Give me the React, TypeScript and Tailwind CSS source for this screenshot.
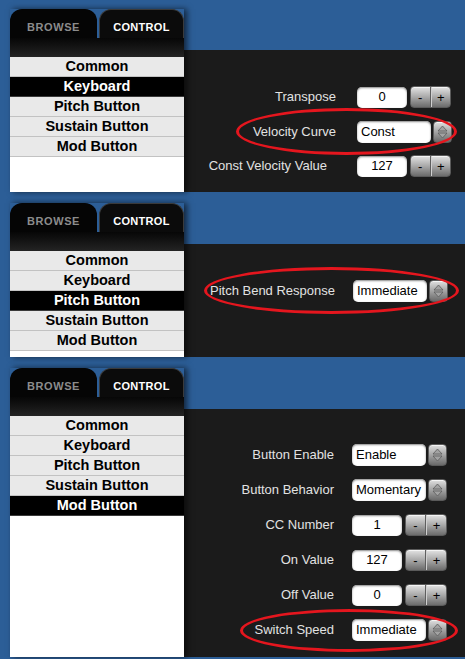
import React from "react";

type Row =
  | { kind: "num"; label: string; value: string; labelPad?: number }
  | { kind: "select"; label: string; value: string; labelPad?: number };

interface Ring {
  row: number;
  left: number;
  right: number;
  top: number;
  bottom: number;
}

interface PanelProps {
  height: number;
  selected: string;
  labelWidth: number;
  gap: number;
  rowGap: number;
  padTop: number;
  rows: Row[];
  ring: Ring;
  inputW: number;
  stepW: number;
}

const MENU = ["Common", "Keyboard", "Pitch Button", "Sustain Button", "Mod Button"];

function Stepper({ width }: { width: number }) {
  return (
    <div
      className="flex h-[22px] rounded-[4px] border border-[#5a5a5a] bg-linear-to-b from-[#e4e4e4] via-[#a9a9a9] to-[#6c6c6c] text-[13px] leading-none text-black shadow-[inset_0_1px_0_#f4f4f4]"
      style={{ width }}
    >
      <div className="flex flex-1 items-center justify-center border-r border-[#5e5e5e]">-</div>
      <div className="flex flex-1 items-center justify-center border-l border-[#d0d0d0]">+</div>
    </div>
  );
}

function UpDown() {
  return (
    <div className="flex h-[22px] w-[19px] items-center justify-center rounded-[4px] border border-[#5a5a5a] bg-linear-to-b from-[#e0e0e0] via-[#a4a4a4] to-[#6a6a6a] shadow-[inset_0_1px_0_#f4f4f4]">
      <svg width="11" height="14" viewBox="0 0 11 14">
        <path d="M5.5 1 L10 6 L1 6 Z" fill="#a2a2a2" stroke="#5c5c5c" strokeWidth="0.8" />
        <path d="M5.5 13 L10 8 L1 8 Z" fill="#a2a2a2" stroke="#5c5c5c" strokeWidth="0.8" />
      </svg>
    </div>
  );
}

function Field({ row, inputW, stepW }: { row: Row; inputW: number; stepW: number }) {
  if (row.kind === "num") {
    return (
      <div className="flex items-center gap-[3px]">
        <div
          className="flex h-[21px] items-center justify-center rounded-[5px] bg-white text-[13px] text-black shadow-[inset_0_1px_2px_#888]"
          style={{ width: inputW }}
        >
          {row.value}
        </div>
        <Stepper width={stepW} />
      </div>
    );
  }
  return (
    <div className="flex items-center gap-[2px]">
      <div className="flex h-[22px] w-[74px] items-center overflow-hidden whitespace-nowrap rounded-[5px] bg-white pl-[4px] text-[13px] text-black shadow-[inset_0_1px_2px_#888]">
        {row.value}
      </div>
      <UpDown />
    </div>
  );
}

function Panel(p: PanelProps) {
  return (
    <div className="flex bg-[#2c5e97] pt-[9px] pb-[2px] pl-[10px]" style={{ height: p.height }}>
      {/* left navigation */}
      <div className="relative z-10 flex w-[174px] flex-col bg-white shadow-[3px_0_6px_rgba(0,0,0,0.6)]">
        <div className="flex h-[29px] gap-[2px] bg-[#2c5e97]">
          <div className="flex w-[87px] items-center justify-center rounded-t-[12px] bg-[#050505] pt-[7px] text-[11px] font-bold tracking-[0.6px] text-[#8c8c8c]">
            BROWSE
          </div>
          <div className="flex flex-1 items-center justify-center rounded-t-[12px] border border-b-0 border-[#3a3a3a] bg-[#0b0b0b] pt-[6px] text-[11px] font-bold tracking-[0.3px] text-white">
            CONTROL
          </div>
        </div>
        <div className="h-[19px] bg-linear-to-b from-[#070707] to-[#242424]" />
        {MENU.map((m) => (
          <div
            key={m}
            className={
              m === p.selected
                ? "flex h-[20px] items-center justify-center border-b border-[#3a3a3a] bg-black text-[14.5px] font-bold text-white"
                : "flex h-[20px] items-center justify-center border-b border-[#c2c2c2] bg-[#e9e9e9] text-[14.5px] font-bold text-black"
            }
          >
            {m}
          </div>
        ))}
        <div className="flex-1 bg-white" />
      </div>

      {/* settings area */}
      <div className="mt-[41px] flex flex-1 flex-col bg-[#1b1b1b]" style={{ paddingTop: p.padTop, rowGap: p.rowGap }}>
        {p.rows.map((r, i) => (
          <div key={r.label} className="relative flex h-[22px] items-center">
            <div
              className="shrink-0 whitespace-nowrap text-right text-[13px] text-[#e2e2e2]"
              style={{ width: p.labelWidth, paddingRight: r.labelPad ?? 0, marginRight: p.gap }}
            >
              {r.label}
            </div>
            <Field row={r} inputW={p.inputW} stepW={p.stepW} />
            {p.ring.row === i && (
              <div
                className="pointer-events-none absolute rounded-[50%] border-[3.5px] border-[#e5161e]"
                style={{ left: p.ring.left, right: p.ring.right, top: p.ring.top, bottom: p.ring.bottom }}
              />
            )}
          </div>
        ))}
      </div>
    </div>
  );
}

export default function App() {
  return (
    <div className="w-[465px] bg-[#2c5e97] font-['Liberation_Sans',Arial,sans-serif]">
      <Panel
        height={194}
        selected="Keyboard"
        labelWidth={152}
        gap={21}
        rowGap={12.5}
        padTop={36}
        inputW={50}
        stepW={41}
        rows={[
          { kind: "num", label: "Transpose", value: "0" },
          { kind: "select", label: "Velocity Curve", value: "Const" },
          { kind: "num", label: "Const Velocity Value", value: "127", labelPad: 9 },
        ]}
        ring={{ row: 1, left: 52, right: 8, top: -13, bottom: -12 }}
      />
      <Panel
        height={165}
        selected="Pitch Button"
        labelWidth={151}
        gap={18}
        rowGap={12}
        padTop={36}
        inputW={50}
        stepW={41}
        rows={[{ kind: "select", label: "Pitch Bend Response", value: "Immediate" }]}
        ring={{ row: 0, left: 20, right: 6, top: -13, bottom: -12 }}
      />
      <Panel
        height={300}
        selected="Mod Button"
        labelWidth={150}
        gap={18}
        rowGap={13}
        padTop={35}
        inputW={50}
        stepW={42}
        rows={[
          { kind: "select", label: "Button Enable", value: "Enable" },
          { kind: "select", label: "Button Behavior", value: "Momentary" },
          { kind: "num", label: "CC Number", value: "1" },
          { kind: "num", label: "On Value", value: "127" },
          { kind: "num", label: "Off Value", value: "0" },
          { kind: "select", label: "Switch Speed", value: "Immediate" },
        ]}
        ring={{ row: 5, left: 56, right: 7, top: -10, bottom: -11 }}
      />
    </div>
  );
}
